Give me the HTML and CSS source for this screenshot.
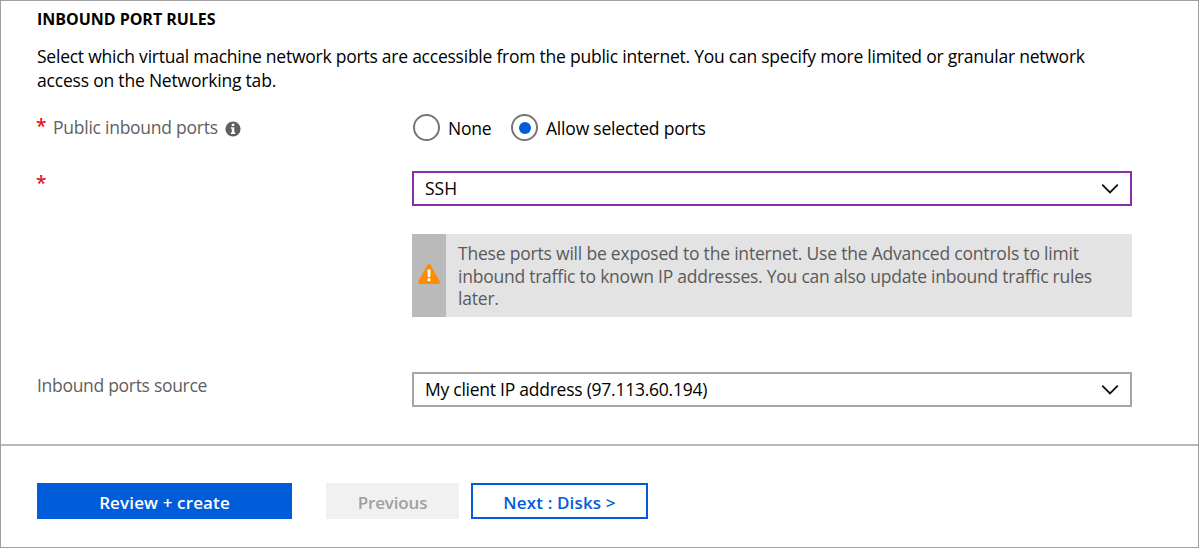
FILE: index.html
```html
<!DOCTYPE html>
<html lang="en">
<head>
<meta charset="utf-8">
<title>Create a virtual machine</title>
<link rel="stylesheet" href="styles.css">
</head>
<body>
<div class="blade">
  <main class="content">
    <h2 class="heading">INBOUND PORT RULES</h2>
    <p class="intro"><span class="t-intro1">Select which virtual machine network ports are accessible from the public internet. You can specify more limited or granular network</span><br><span class="t-intro2">access on the Networking tab.</span></p>
    <div class="row row-ports">
      <div class="label"><span class="required">*</span><span class="t-public">Public inbound ports</span>
        <svg class="info" viewBox="0 0 16 16"><circle cx="8" cy="8" r="7.6" fill="#5f5f5f"/><path d="M6.800 2.800h2.500v2.200H6.800zM6 6.300h3.300v5.200h1V13H5.800v-1.500h1V7.800H6z" fill="#fff"/></svg>
      </div>
      <div class="radios">
        <span class="radio"></span><span class="radio-text none"><span class="t-none">None</span></span>
        <span class="radio selected"></span><span class="radio-text"><span class="t-allow">Allow selected ports</span></span>
      </div>
    </div>
    <div class="row row-select">
      <div class="label"><span class="required">*</span></div>
      <div class="select focused"><span class="t-ssh">SSH</span>
        <svg class="chevron" viewBox="0 0 18 12"><path d="M1.2 1.6 9 9.4l7.8-7.8" fill="none" stroke="#111" stroke-width="1.8"/></svg>
      </div>
    </div>
    <div class="warning">
      <div class="warning-icon">
        <svg viewBox="0 0 22 20"><path d="M9.3 1.2Q11-1 12.7 1.2L21.5 17q1.2 3-1 3h-19q-2.200 0-1-3z" fill="#ff8c00"/><path d="M9.400 5.500h3.200l-.4 7.500h-2.400z" fill="#fff"/><circle cx="11" cy="15.700" r="1.600" fill="#fff"/></svg>
      </div>
      <div class="warning-text"><span class="t-warn1">These ports will be exposed to the internet. Use the Advanced controls to limit</span><br><span class="t-warn2">inbound traffic to known IP addresses. You can also update inbound traffic rules</span><br><span class="t-warn3">later.</span></div>
    </div>
    <div class="row row-source">
      <div class="label"><span class="t-source">Inbound ports source</span></div>
      <div class="select"><span class="t-client">My client IP address (97.113.60.194)</span>
        <svg class="chevron" viewBox="0 0 18 12"><path d="M1.2 1.6 9 9.4l7.8-7.8" fill="none" stroke="#111" stroke-width="1.8"/></svg>
      </div>
    </div>
  </main>
  <footer class="actions">
    <button class="btn primary"><span class="t-review">Review + create</span></button>
    <button class="btn disabled" disabled><span class="t-prev">Previous</span></button>
    <button class="btn outline"><span class="t-next">Next : Disks &gt;</span></button>
  </footer>
</div>
</body>
</html>
```
FILE: styles.css
```css
* { box-sizing: border-box; }
body { margin: 0; font: 17.5px/24px "Open Sans", "Noto Sans", sans-serif; color: #000; background: #fff; }
.blade { height: 548px; border: 1px solid #a0a0a0; display: flex; flex-direction: column; white-space: nowrap; }
.content { height: 445px; padding: 6px 66px 0 36px; border-bottom: 2px solid #b9b9b9; }
.heading { margin: 0; font-size: 16px; line-height: 24px; font-weight: 700; letter-spacing: -.03px; }
.intro { margin: 13px 0 0; height: 48px; }
.row { display: grid; grid-template-columns: 375px 720px; }
.label { display: flex; color: #5f5f5f; padding-top: 1px; }
.required { width: 17px; margin: -1px 0 0 -1px; color: #e81123; font-weight: 600; font-size: 19px; }
.row-ports { margin-top: 22px; height: 27px; }
.info { width: 16px; height: 16px; margin: 6px 0 0 7px; }
.radios { display: flex; align-items: center; padding-left: 1px; }
.radio { width: 27px; height: 27px; border: 2px solid #767676; border-radius: 50%; display: grid; place-items: center; }
.selected::before { content: ""; width: 12px; height: 12px; border-radius: 50%; background: #015cda; }
.radio-text { padding: 1px 0 0 8px; }
.none { width: 71px; }
.row-select { margin-top: 30px; }
.select { height: 35px; border: 2px solid #a6a6a6; padding: 0 11px; display: flex; align-items: center; justify-content: space-between; }
.select span { padding-bottom: 2px; }
.focused { border-color: #892ea6; }
.chevron { width: 18px; height: 12px; }
.warning { margin: 28px 0 0 375px; width: 720px; height: 83px; display: flex; background: #e3e3e3; color: #5a5a5a; line-height: 22.5px; }
.warning-icon { width: 34px; background: #bababa; display: grid; place-items: center; padding-bottom: 3px; }
.warning-icon svg { width: 22px; height: 20px; }
.warning-text { padding: 8px 12px; }
.row-source { margin-top: 55px; }
.actions { padding: 37px 36px 0; display: flex; }
.btn { height: 36px; border: 0; padding: 3px 0 0; font: 600 17px/24px "Open Sans", "Noto Sans", sans-serif; }
.primary { width: 255px; background: #015cda; color: #fff; }
.disabled { width: 133px; margin-left: 34px; background: #f1f1f1; color: #a0a0a0; }
.outline { width: 177px; margin-left: 12px; border: 2px solid #015cda; background: #fff; color: #015cda; }
.t-intro1, .t-warn2 { letter-spacing: -.237px; }
.t-intro2, .t-warn1, .t-warn3 { letter-spacing: -.2px; }
.t-public, .t-none, .t-client { letter-spacing: -.25px; }
.t-allow { letter-spacing: -.2px; }
.t-source { letter-spacing: -.3px; }
.t-review, .t-next { letter-spacing: .14px; }
.t-prev { letter-spacing: -.15px; }
```
